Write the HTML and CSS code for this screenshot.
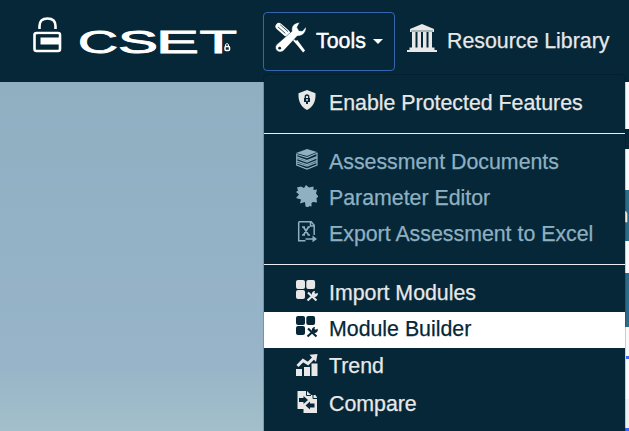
FILE: index.html
```html
<!DOCTYPE html>
<html lang="en">
<head>
<meta charset="utf-8">
<title>CSET</title>
<link rel="stylesheet" href="styles.css">
</head>
<body>
<svg class="defs" width="0" height="0" aria-hidden="true">
  <symbol id="modules" viewBox="0 0 22 22">
    <g fill="currentColor"><rect x="0" y="0" width="9" height="9" rx="2"/><rect x="10.3" y="0" width="8.8" height="9" rx="2"/><rect x="0" y="10" width="9" height="9" rx="2"/></g>
    <path d="M12 12.500l8.500 8M11.500 20.500l6-5.500" stroke="currentColor" stroke-width="2.200" fill="none"/>
    <path d="M16 15a3 3 0 0 1 3-4l-.5 2 1.200.7 1.800-1a3 3 0 0 1-4 4z" fill="currentColor"/>
  </symbol>
</svg>
<header class="bar">
  <svg class="lock" viewBox="0 0 30 38">
    <path d="M6.500 12V9Q6.500 1.500 14.500 1.500T22.500 9v3" fill="none" stroke="#fff" stroke-width="2.600"/>
    <rect x="1.500" y="16" width="25.500" height="18" rx="2" fill="none" stroke="#fff" stroke-width="2.600"/>
    <path d="M26 20.500H7.500v7H26z" fill="#fff"/>
    <path d="M25.500 18.500H5.500v11H24" fill="none" stroke="#052737" stroke-width="1.800"/>
  </svg>
  <svg class="word" viewBox="0 0 160 30">
    <text y="23.500"><tspan x="-2" textLength="40" lengthAdjust="spacingAndGlyphs">C</tspan><tspan x="38" textLength="40" lengthAdjust="spacingAndGlyphs">S</tspan><tspan x="76" textLength="43" lengthAdjust="spacingAndGlyphs">E</tspan><tspan x="119.500" textLength="37.500" lengthAdjust="spacingAndGlyphs">T</tspan></text>
    <path d="M145.500 17v-1.500q1.500-2 3 0V17" fill="none" stroke="#fff"/>
    <rect x="145" y="17.500" width="4.500" height="4" rx="1" fill="none" stroke="#fff" stroke-width="1.500"/>
  </svg>
  <button class="tools">
    <svg class="toolicon" viewBox="0 0 32 32">
      <path d="M4 4.500l8 7" stroke="#fff" stroke-width="7" stroke-linecap="round"/>
      <path d="M3 5l8.500 7.500M5.500 3l8 7" stroke="#052737" stroke-width=".8"/>
      <path d="M11 11l13 12" stroke="#fff" stroke-width="2"/>
      <path d="M20 20.500l3-2 8 11-2 2z" fill="#fff"/>
      <path d="M1.500 23.500L17.500 9.500C16.500 4 20 .8 25.500.5l-2.700 5 2 3.500 3.500.2L32 5c.5 5-3 9.700-9 9.500L9 29.500c-4 4-11-1-7.500-6z" fill="#fff" stroke="#052737" stroke-width=".5"/>
      <circle cx="4.800" cy="27" r="1.500" fill="#052737"/>
    </svg>
    <span>Tools</span><i class="caret"></i>
  </button>
  <a class="library">
    <svg viewBox="0 0 30 28" fill="#e8e8e8">
      <path d="M15 0l12 5v3H3V5z"/><path d="M4 6h22v2H4z" fill="#aab5ba"/>
      <path d="M5 8h3.500v16H5zm5.500 0H14v16h-3.500zM16 8h3.500v16H16zm5.500 0H25v16h-3.500zM2.500 23.500h25V26h-25zM0 26h30v2H0z"/>
    </svg>
    <span>Resource Library</span>
  </a>
</header>
<main class="page">
  <div class="edge"><i class="dark"></i><i class="gap"></i><i class="blue first">n</i><i class="gap2"></i><i class="blue second"></i><i class="mark"></i><i class="gap3"></i><i class="grey"></i></div>
</main>
<nav class="menu">
  <a class="enable"><svg viewBox="0 0 22 22"><path d="M11 0l8.500 3.200c.5 8-2.500 14-8.500 16.800C5 17.200 2 11.200 2.500 3.200z" fill="currentColor"/><path d="M9.300 8.500V6q1.700-2 3.400 0v2.500" fill="none" stroke="#052737" stroke-width="1.300"/><path d="M8 8h6v4H8zM10 12h2v2h-2z" fill="#052737"/><path d="M10.300 9h1.400v2h-1.400z" fill="currentColor"/></svg><span>Enable Protected Features</span></a>
  <hr>
  <a class="off"><svg viewBox="0 0 22 22"><path d="M0 4l11-4 10 3-10 4z" fill="currentColor"/><path d="M.7 4.500v3.300L11 11.500l10-4M.7 8v4L11 15.500l10-4M.7 12.500V16L11 20l10-4V3.500M1 5.500l10 3 9.500-4M1 9.500l10 3.500 9.500-4M1 14l10 3 9.500-3.500" fill="none" stroke="currentColor" stroke-width="1.200"/></svg><span>Assessment Documents</span></a>
  <a class="off"><svg viewBox="0 0 22 22"><path d="M1 2.500l4-1 3 1.500 2-3 3 2.500 4.500-1V5l3.500-.5-1 4 2.500 3-2 1.500.5 4.500-4-.5-1.500 1v3.500l-2.500-.5-.5 1.500-3-1-.5-4.500-5 1.500 1-4L0 13l3-3.500L0 7l2-1.500z" fill="currentColor"/></svg><span>Parameter Editor</span></a>
  <a class="off"><svg viewBox="0 0 22 22"><path d="M2.700.8h12.500l3 3.500V14M2.700.8v19h6.800M14.500 1v4h4" fill="none" stroke="currentColor" stroke-width="1.500"/><path d="M7.500 6l5 8M12.500 6l-5 8M6 6h3M11.500 6H14M6 14h3M11.500 14H14M9.500 18h9" fill="none" stroke="currentColor" stroke-width="1.700"/><path d="M16.500 14.500l4.500 3.500-4.500 3.300z" fill="currentColor"/></svg><span>Export Assessment to Excel</span></a>
  <hr class="second">
  <a class="import"><svg><use href="#modules"/></svg><span>Import Modules</span></a>
  <a class="active"><svg><use href="#modules"/></svg><span>Module Builder</span></a>
  <a class="trend"><svg viewBox="0 0 22 22"><path d="M0 15h6v7H0zM8 13h6v9H8zM15.500 9.500H21.500V22h-6z" fill="currentColor"/><path d="M1.500 12L7 6.500l5 3L18 3.500" fill="none" stroke="currentColor" stroke-width="3"/><path d="M13.500.8L21.500 0 20 8z" fill="currentColor"/></svg><span>Trend</span></a>
  <a class="compare"><svg viewBox="0 0 22 22"><path d="M1.500 0h9.500l4 4h4.500l1.500 2.500V22H7.500v-4h-6z" fill="currentColor"/><path d="M10.500 0v4.500H15M17 3.500v4h4" fill="none" stroke="#052737"/><path d="M3 7h4.500V5l4.500 4-4.500 4v-2H3z" fill="#052737"/><path d="M18.500 16.500H14v2L9.500 14.500l4.500-4v2h4.500z" fill="#052737"/></svg><span>Compare</span></a>
</nav>
</body>
</html>
```
FILE: styles.css
```css
* { box-sizing: border-box; }
body { margin: 0; width: 629px; height: 431px; overflow: hidden; position: relative; font: 21.33px "Liberation Sans", Arial, sans-serif; color: #e8e8e8; -webkit-text-stroke: .25px currentColor; }
.defs { position: absolute; }
.bar { height: 82px; background: #052737; display: flex; align-items: flex-start; white-space: nowrap; }
.lock { width: 30px; height: 38px; margin: 17px 0 0 33px; flex: none; }
.word { width: 160px; height: 30px; margin: 29px 0 0 17px; flex: none; overflow: visible; }
.word text { font: 32px "Liberation Sans", Arial, sans-serif; fill: #fff; stroke: #fff; stroke-width: .9px; -webkit-text-stroke: .9px #fff; }
.tools { width: 132px; height: 59px; margin: 12px 0 0 23px; padding: 0 0 2px 11px; flex: none; display: flex; align-items: center; border: 1px solid #3565ae; border-radius: 4px; background: none; color: #fff; font: inherit; -webkit-text-stroke: .45px #fff; }
.toolicon { width: 31px; height: 31px; margin: -6px 10px 0 0; }
.tools span { margin-top: 1px; }
.caret { border: 5px solid transparent; border-top-color: #fff; border-bottom: 0; margin: 2px 0 0 7px; }
.library { height: 82px; display: flex; align-items: center; margin-left: 12px; }
.library svg { width: 30px; height: 28px; margin: -6px 10px 0 0; }
.page { height: 349px; display: flex; justify-content: flex-end; background: linear-gradient(#90afc1, #97b4c8 80%, #a3bfca); }
.edge { width: 4px; overflow: hidden; background: #fafafa; }
.edge i { display: block; font-style: normal; }
.dark { height: 20px; margin-top: 47px; background: #052737; }
.gap { height: 41px; }
.blue { background: #2d6b8b; }
.first { height: 51px; line-height: 50px; color: #fff; font-size: 20px; text-indent: -8px; }
.gap2 { height: 32px; }
.blue.second { height: 54px; }
.mark { height: 3px; margin: 29px 0 0 1px; background: #3c68ff; }
.gap3 { height: 40px; }
.grey { height: 32px; background: #f1f1f1; border-bottom: 3px solid #3c68ff; }
.menu { position: absolute; left: 263px; top: 74px; width: 363px; height: 365px; padding-top: 10px; background: #052737; background-clip: padding-box; border: 1px solid rgba(0,0,0,.18); border-radius: 5px; }
.menu a { display: flex; align-items: center; height: 36px; padding-left: 32px; white-space: nowrap; }
.menu svg { width: 22px; height: 22px; margin: -4px 11px 0 0; flex: none; }
.menu hr { height: 1px; border: 0; margin: 12px 0 10px; background: #e9edf0; }
.menu hr.second { margin-bottom: 9px; }
.menu .off { color: #8eb0c2; }
.menu .import { height: 38px; }
.menu .active { background: #fff; color: #052737; padding-bottom: 2px; }
.menu .trend { height: 37px; }
.menu .compare { height: 38px; }
```
